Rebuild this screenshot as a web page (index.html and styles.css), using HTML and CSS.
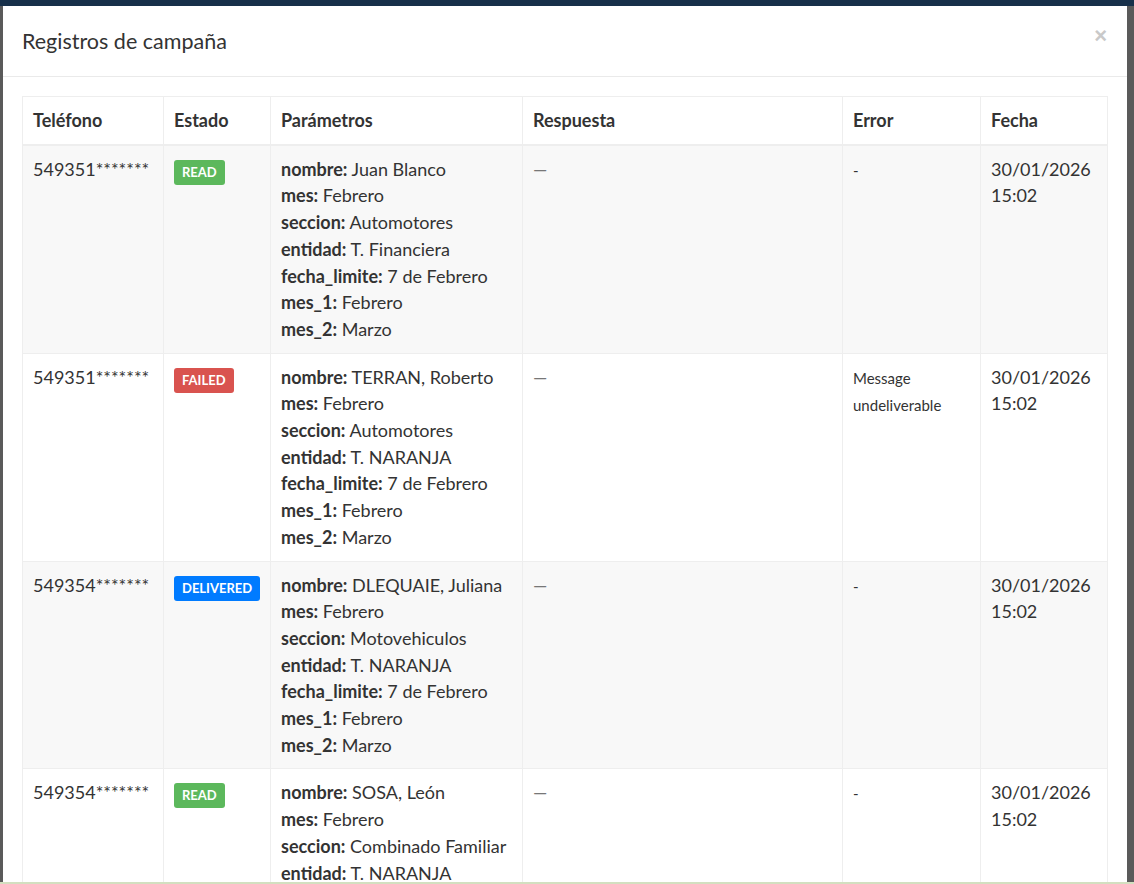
FILE: index.html
```html
<!DOCTYPE html>
<html>
<head>
    <title>Registros de campaña</title>
    <link rel="stylesheet" href="styles.css">
</head>
<body>
    <div class="page-top"></div>
    <div class="modal">
        <div class="modal-header">
            <h4 class="modal-title">Registros de campaña</h4>
            <button class="close">&times;</button>
        </div>
        <div class="modal-body">
            <table class="table">
                <thead>
                    <tr>
                        <th class="col-phone">Teléfono</th>
                        <th class="col-state">Estado</th>
                        <th class="col-params">Parámetros</th>
                        <th class="col-reply">Respuesta</th>
                        <th class="col-error">Error</th>
                        <th class="col-date">Fecha</th>
                    </tr>
                </thead>
                <tbody>
                    <tr>
                        <td>549351*******</td>
                        <td><span class="label green">READ</span></td>
                        <td>
                            <b>nombre:</b> Juan Blanco<br>
                            <b>mes:</b> Febrero<br>
                            <b>seccion:</b> Automotores<br>
                            <b>entidad:</b> T. Financiera<br>
                            <b>fecha_limite:</b> 7 de Febrero<br>
                            <b>mes_1:</b> Febrero<br>
                            <b>mes_2:</b> Marzo
                        </td>
                        <td><span class="muted">—</span></td>
                        <td><small>-</small></td>
                        <td>30/01/2026<br>15:02</td>
                    </tr>
                    <tr>
                        <td>549351*******</td>
                        <td><span class="label red">FAILED</span></td>
                        <td>
                            <b>nombre:</b> TERRAN, Roberto<br>
                            <b>mes:</b> Febrero<br>
                            <b>seccion:</b> Automotores<br>
                            <b>entidad:</b> T. NARANJA<br>
                            <b>fecha_limite:</b> 7 de Febrero<br>
                            <b>mes_1:</b> Febrero<br>
                            <b>mes_2:</b> Marzo
                        </td>
                        <td><span class="muted">—</span></td>
                        <td><small>Message undeliverable</small></td>
                        <td>30/01/2026<br>15:02</td>
                    </tr>
                    <tr>
                        <td>549354*******</td>
                        <td><span class="label blue">DELIVERED</span></td>
                        <td>
                            <b>nombre:</b> DLEQUAIE, Juliana<br>
                            <b>mes:</b> Febrero<br>
                            <b>seccion:</b> Motovehiculos<br>
                            <b>entidad:</b> T. NARANJA<br>
                            <b>fecha_limite:</b> 7 de Febrero<br>
                            <b>mes_1:</b> Febrero<br>
                            <b>mes_2:</b> Marzo
                        </td>
                        <td><span class="muted">—</span></td>
                        <td><small>-</small></td>
                        <td>30/01/2026<br>15:02</td>
                    </tr>
                    <tr>
                        <td>549354*******</td>
                        <td><span class="label green">READ</span></td>
                        <td>
                            <b>nombre:</b> SOSA, León<br>
                            <b>mes:</b> Febrero<br>
                            <b>seccion:</b> Combinado Familiar<br>
                            <b>entidad:</b> T. NARANJA<br>
                            <b>fecha_limite:</b> 7 de Febrero<br>
                            <b>mes_1:</b> Febrero<br>
                            <b>mes_2:</b> Marzo
                        </td>
                        <td><span class="muted">—</span></td>
                        <td><small>-</small></td>
                        <td>30/01/2026<br>15:02</td>
                    </tr>
                </tbody>
            </table>
        </div>
    </div>
    <div class="page-bottom"></div>
</body>
</html>
```

FILE: styles.css
```css
html, body {
    margin: 0;
    height: 100%;
    overflow: hidden;
}
body {
    background: #5a5a5a;
    font-family: Lato, "Liberation Sans", sans-serif;
    color: #333;
    position: relative;
}
.page-top {
    height: 6px;
    background: #17304a;
}
.modal {
    margin-left: 3px;
    width: 1124px;
    background: #fff;
}
.modal-header {
    display: flex;
    align-items: center;
    justify-content: space-between;
    padding: 0 20px 0 19px;
    height: 70px;
    border-bottom: 1px solid #eaeaea;
}
.modal-title {
    margin: 0;
    font-size: 21.5px;
    font-weight: 400;
    color: #333;
}
.close {
    background: none;
    border: none;
    padding: 0;
    margin-top: -10px;
    font-size: 22px;
    font-weight: 700;
    color: #c9c9c9;
    font-family: "Liberation Sans", sans-serif;
    cursor: pointer;
}
.modal-body {
    padding: 19px 20px 20px 19px;
}
.table {
    width: 1085px;
    border-collapse: collapse;
    table-layout: fixed;
    font-size: 18px;
    line-height: 26.7px;
}
.table th,
.table td {
    border: 1px solid #eee;
    padding: 10px;
    text-align: left;
    vertical-align: top;
}
.table th {
    font-weight: 700;
    border-bottom-width: 2px;
}
.table tbody tr:nth-child(odd) {
    background: #f8f8f8;
}
.col-phone { width: 120px; }
.col-state { width: 86px; }
.col-params { width: 231px; }
.col-reply { width: 299px; }
.col-error { width: 117px; }
.col-date { width: 106px; }
.table b {
    font-weight: 700;
}
.muted {
    color: #777;
}
.table small {
    font-size: 15px;
}
.label {
    display: inline-block;
    margin-top: 4px;
    padding: 6px 8px;
    font-size: 13px;
    line-height: 13px;
    font-weight: 700;
    color: #fff;
    border-radius: 3px;
}
.label.green { background: #5cb85c; }
.label.red { background: #d9534f; }
.label.blue { background: #007bff; }
.page-bottom {
    position: absolute;
    left: 0;
    right: 0;
    bottom: 0;
    height: 2px;
    background: #d3dfc0;
}
```
